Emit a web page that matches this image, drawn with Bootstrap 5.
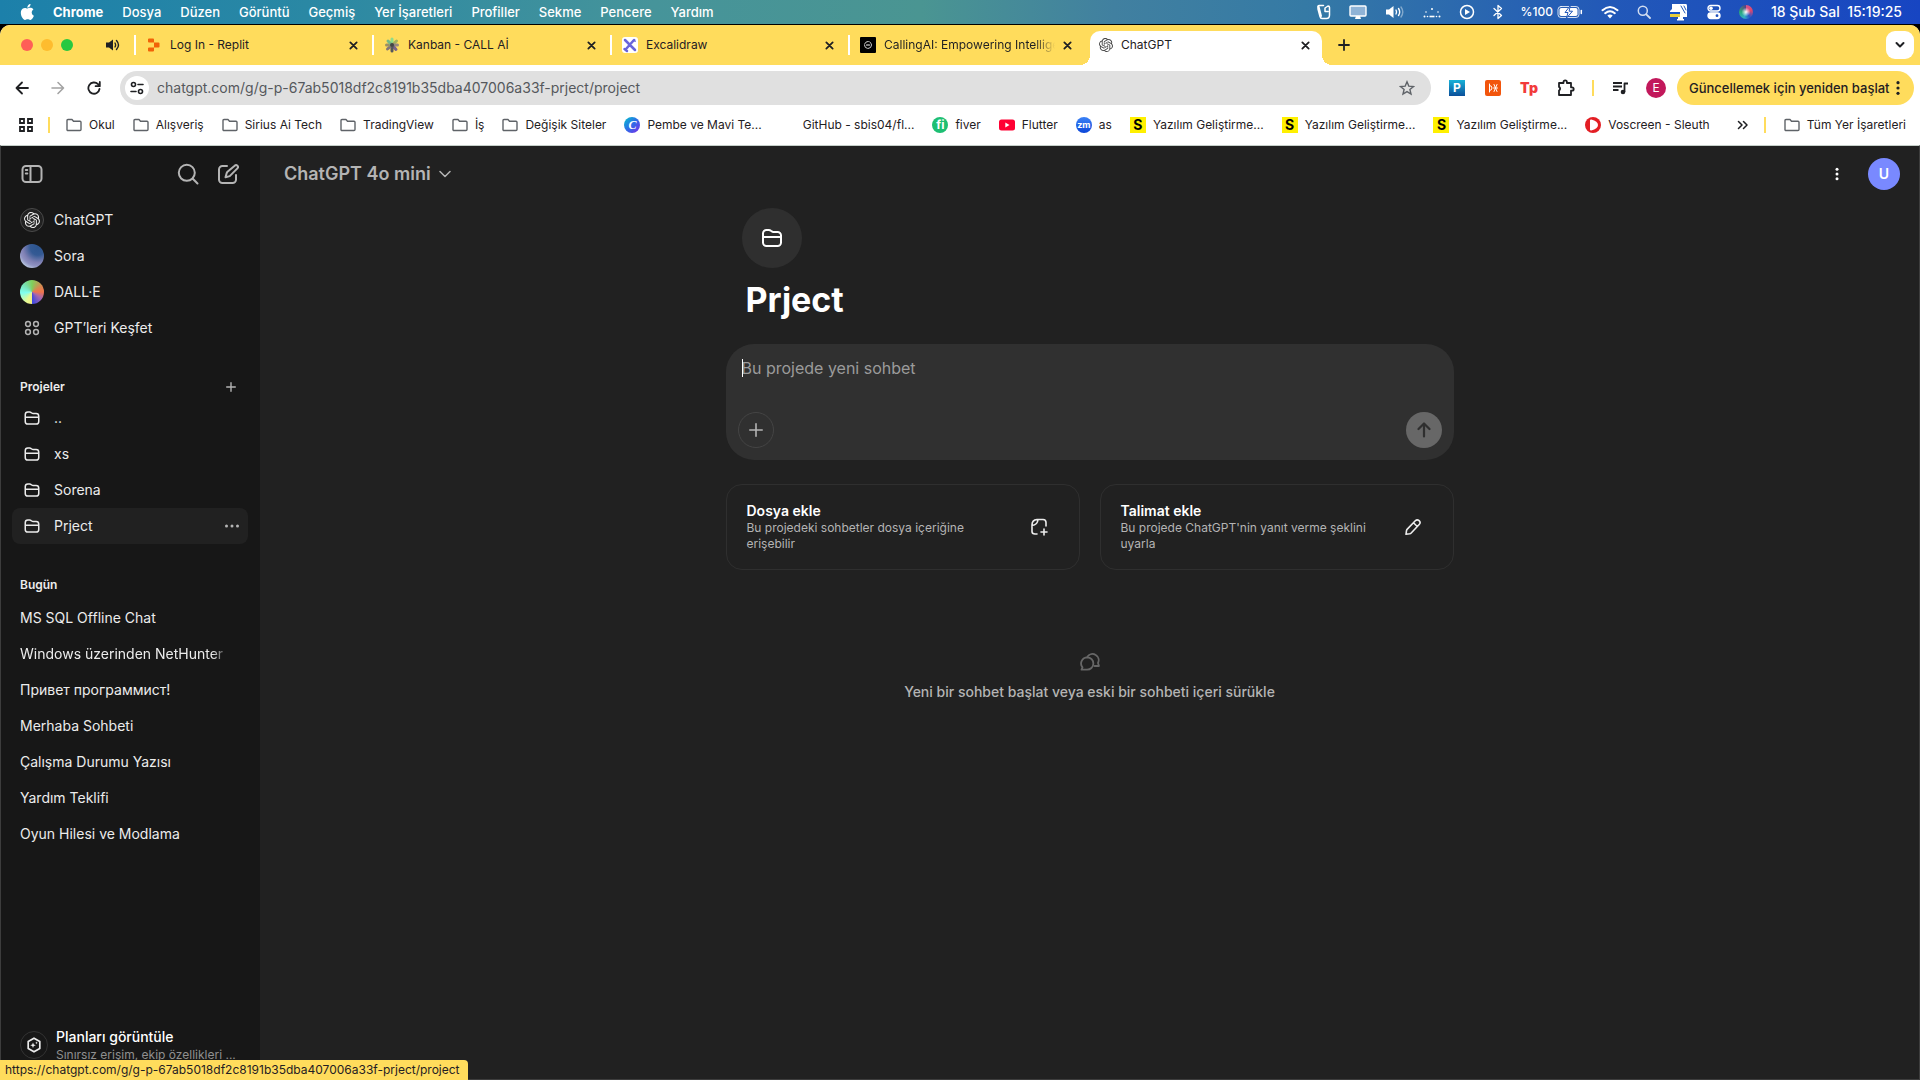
<!DOCTYPE html>
<html lang="tr" data-bs-theme="light">
<head>
<meta charset="utf-8">
<meta name="viewport" content="width=device-width, initial-scale=1">
<title>ChatGPT</title>
<link href="https://cdn.jsdelivr.net/npm/bootstrap@5.3.0/dist/css/bootstrap.min.css" rel="stylesheet">
<style>
:root{--gold:#ffdc5c;--ink:#1f2023;--side:#171717;--page:#212121;--fg:#ececec;--dim:#b4b4b4}
body{font-family:Inter,"Liberation Sans",sans-serif;font-size:12px;line-height:16px;background:#000;overflow:hidden}
svg{display:block;flex:none;fill:none;stroke:currentColor;stroke-width:2;stroke-linecap:round;stroke-linejoin:round}
svg .solid,svg.solid{fill:currentColor;stroke:none}
a{color:inherit;text-decoration:none}
button{background:none;border:0;padding:0;color:inherit;font:inherit}
.cell{display:flex;align-items:center;justify-content:center;flex:none}
/* system menu bar */
.sysbar{height:24px;background:linear-gradient(90deg,#1c80aa 0,#2a88a4 16%,#46949a 34%,#4a9592 48%,#4180a0 58%,#357aa5 68%,#2258b8 84%,#1745c2 100%);color:#fff;font-size:13px;font-weight:500;padding:0 18px 0 20px}
.sysbar nav{gap:19px}
.sysbar .tray{gap:18px}
.sysbar .charge{font-size:12px}
.clock{white-space:pre;font-size:14px}
.siri{width:14px;height:14px;border-radius:50%;background:radial-gradient(circle,#fff 0,#fff8 20%,transparent 45%),conic-gradient(#d3558b,#e0476c 20%,#2857c8 40%,#35b0c4 55%,#2aa87a 75%,#5b3f83)}
/* window */
.win{background:#fff;margin-top:1px;border-radius:10px 10px 0 0;overflow:hidden}
.strip{background:var(--gold);height:40px;padding:6px 6px 0 21px;color:var(--ink)}
.lights{gap:8px;width:83px}
.lights span{width:12px;height:12px;border-radius:50%}
.speaker{width:30px;padding-left:2px}
.tabitem{width:238px;height:20px;margin-top:4px;padding:0 14px 0 10px;position:relative;border-left:2px solid #fff}
.tabitem.on{background:#fff;border:0;height:34px;margin:0 0 0 4px;padding:0 8px 6px 9px;border-radius:10px 10px 0 0;width:232px}
.tabitem.on::before,.tabitem.on::after{content:"";position:absolute;bottom:0;width:10px;height:10px}
.tabitem.on::before{left:-10px;background:radial-gradient(circle at 0 0,transparent 10px,#fff 10px)}
.tabitem.on::after{right:-10px;background:radial-gradient(circle at 100% 0,transparent 10px,#fff 10px)}
.fade-end{overflow:hidden;white-space:nowrap;-webkit-mask-image:linear-gradient(90deg,#000 calc(100% - 20px),transparent)}
.tools{background:#fff;height:46px;padding:6px 6px 0 4px;color:var(--ink)}
.omni{height:34px;border-radius:17px;background:#e0e0e0;padding:0 16px 0 5px}
.omni input{background:none;border:0;outline:0;font-size:14px;line-height:20px;color:#55585c;width:100%;padding:0}
.sitebtn{width:24px;height:24px;border-radius:50%;background:#fff}
.update{height:34px;border-radius:17px;background:var(--gold);font-size:13px;font-weight:500;width:237px;padding:0 9px 0 12px}
.marks{height:34px;padding:0 14px 6px 18px;color:var(--ink)}
.marks .list{gap:18px}
.marks a{display:flex;align-items:center;gap:7px;white-space:nowrap}
.dir{color:#5f6368}
.fav{width:16px;height:16px;display:flex;align-items:center;justify-content:center;flex:none;font-weight:700;line-height:16px}
.fav.yz{background:#fff000;color:#000;font-size:14px}
.vline{width:2px;height:16px;background:var(--gold);flex:none}
/* application */
.app{background:var(--page);color:var(--fg);border:1px solid #3d3d3d;border-top-color:#c5cfc9;font-size:14px;line-height:20px}
.side{width:259px;background:var(--side);padding:0 12px 0 11px}
.side .row-link{display:flex;align-items:center;height:36px;padding:0 8px;border-radius:8px;gap:10px}
.side .row-link.on{background:#212121}
.side h2{font-size:12px;font-weight:600;line-height:16px;margin:0}
.side .head{height:34px;margin-top:24px;padding:0 8px}
.side .head + .row-link{margin-top:-4px}
.side .head + .row-link.chat{margin-top:-2px}
.chatname{width:208px}
.side .chatname{-webkit-mask-image:linear-gradient(90deg,#000 calc(100% - 16px),transparent)}
.ring{width:24px;height:24px;border-radius:50%}
.main-col{width:728px;max-width:100%}
.composer{background:#303030;border-radius:28px;height:116px;padding:12px}
.field{position:relative;height:24px}
.field::before{content:"";position:absolute;left:4px;top:3px;width:1px;height:18px;background:#fff}
.composer textarea{display:block;width:100%;background:none;border:0;outline:0;resize:none;color:var(--fg);font-size:16px;line-height:24px;padding:0 4px;height:24px}
.composer textarea::placeholder{color:#9b9b9b;opacity:1}
.tile{border:1px solid #2f2f2f;border-radius:16px;height:86px;padding:0 31px 0 20px;text-align:left;flex:1 1 0}
.tile small{font-size:12px;line-height:16px;color:var(--dim);display:block;width:250px}
.statusbox{position:fixed;left:0;bottom:0;height:20px;background:var(--gold);color:var(--ink);border-radius:0 4px 0 0;padding:2px 8px 0 5px;font-size:12px;line-height:16px}
</style>
<script src="https://cdn.jsdelivr.net/npm/bootstrap@5.3.0/dist/js/bootstrap.bundle.min.js"></script>
</head>
<body class="vh-100 d-flex flex-column">

<svg width="0" height="0" class="position-absolute" aria-hidden="true">
  <symbol id="x" viewBox="0 0 10 10"><path d="M1.500 1.500l7 7M8.500 1.500l-7 7"/></symbol>
  <symbol id="bmfolder" viewBox="0 0 16 16"><path d="M1 13V3.500Q1 2.500 2 2.500H6L7.500 4.300H14Q15 4.300 15 5.300V12.500Q15 13.500 14 13.500H1.500Z" stroke-width="1.400"/></symbol>
  <symbol id="folder" viewBox="0 0 24 24"><path d="M3 7.500A3.500 3.500 0 0 1 6.500 4h2.300c.8 0 1.500.3 2.100.8l.7.500c.5.400 1.100.7 1.800.7h4.100A3.500 3.500 0 0 1 21 9.500v7a3.500 3.500 0 0 1-3.500 3.500h-11A3.500 3.500 0 0 1 3 16.500zM3 11h18"/></symbol>
  <symbol id="openai" viewBox="0 0 24 24"><path class="solid" d="M22.2819 9.8211a5.9847 5.9847 0 0 0-.5157-4.9108 6.0462 6.0462 0 0 0-6.5098-2.9A6.0651 6.0651 0 0 0 4.9807 4.1818a5.9847 5.9847 0 0 0-3.9977 2.9 6.0462 6.0462 0 0 0 .7427 7.0966 5.98 5.98 0 0 0 .511 4.9107 6.051 6.051 0 0 0 6.5146 2.9001A5.9847 5.9847 0 0 0 13.2599 24a6.0557 6.0557 0 0 0 5.7718-4.2058 5.9894 5.9894 0 0 0 3.9977-2.9001 6.0557 6.0557 0 0 0-.7475-7.0729zm-9.022 12.6081a4.4755 4.4755 0 0 1-2.8764-1.0408l.1419-.0804 4.7783-2.7582a.7948.7948 0 0 0 .3927-.6813v-6.7369l2.02 1.1686a.071.071 0 0 1 .038.052v5.5826a4.504 4.504 0 0 1-4.4945 4.4944zm-9.6607-4.1254a4.4708 4.4708 0 0 1-.5346-3.0137l.142.0852 4.783 2.7582a.7712.7712 0 0 0 .7806 0l5.8428-3.3685v2.3324a.0804.0804 0 0 1-.0332.0615L9.74 19.9502a4.4992 4.4992 0 0 1-6.1408-1.6464zM2.3408 7.8956a4.485 4.485 0 0 1 2.3655-1.9728V11.6a.7664.7664 0 0 0 .3879.6765l5.8144 3.3543-2.0201 1.1685a.0757.0757 0 0 1-.071 0l-4.8303-2.7865A4.504 4.504 0 0 1 2.3408 7.872zm16.5963 3.8558L13.1038 8.364 15.1192 7.2a.0757.0757 0 0 1 .071 0l4.8303 2.7913a4.4944 4.4944 0 0 1-.6765 8.1042v-5.6772a.79.79 0 0 0-.407-.667zm2.0107-3.0231l-.142-.0852-4.7735-2.7818a.7759.7759 0 0 0-.7854 0L9.409 9.2297V6.8974a.0662.0662 0 0 1 .0284-.0615l4.8303-2.7866a4.4992 4.4992 0 0 1 6.6802 4.66zM8.3065 12.863l-2.02-1.1638a.0804.0804 0 0 1-.038-.0567V6.0742a4.4992 4.4992 0 0 1 7.3757-3.4537l-.142.0805L8.704 5.459a.7948.7948 0 0 0-.3927.6813zm1.0976-2.3654l2.602-1.4998 2.6069 1.4998v2.9994l-2.5974 1.4997-2.6067-1.4997Z"/></symbol>
</svg>

<header class="sysbar d-flex align-items-center justify-content-between">
  <nav class="d-flex align-items-center">
    <svg width="14" height="16" viewBox="1 0 21 24" class="solid"><path d="M12.152 6.896c-.948 0-2.415-1.078-3.96-1.04-2.04.027-3.91 1.183-4.961 3.014-2.117 3.675-.546 9.103 1.519 12.09 1.013 1.454 2.208 3.09 3.792 3.039 1.52-.065 2.09-.987 3.935-.987 1.831 0 2.35.987 3.96.948 1.637-.026 2.676-1.48 3.676-2.948 1.156-1.688 1.636-3.325 1.662-3.415-.039-.013-3.182-1.221-3.22-4.857-.026-3.040 2.480-4.494 2.597-4.559-1.429-2.090-3.623-2.324-4.390-2.376-2-.156-3.675 1.090-4.610 1.090zM15.530 3.830c.843-1.012 1.400-2.427 1.245-3.830-1.207.052-2.662.805-3.532 1.818-.780.896-1.454 2.338-1.273 3.714 1.338.104 2.715-.688 3.559-1.701"/></svg>
    <a href="#" class="fw-bold">Chrome</a><a href="#">Dosya</a><a href="#">Düzen</a><a href="#">Görüntü</a><a href="#">Geçmiş</a><a href="#">Yer İşaretleri</a><a href="#">Profiller</a><a href="#">Sekme</a><a href="#">Pencere</a><a href="#">Yardım</a>
  </nav>
  <div class="tray d-flex align-items-center">
    <svg width="14" height="16" viewBox="0 0 14 16" style="stroke-width:1.500"><path d="M6.500 1.500H2Q1 1.500 1 2.500V5l2 7.500Q3.500 14.500 5 14.500H9.500Q12.500 14.500 12.500 11V3.500Q12.500 2 11 2L8 4V7.500H11"/><path d="M1.500 2.500L4 12" style="stroke-width:2"/></svg>
    <svg width="18" height="16" viewBox="0 0 18 16"><rect x="1" y="2" width="16" height="10" rx="1" fill="#8fb3d6" stroke-width="1.400"/><path class="solid" d="M7 12h4l1 3H6z"/></svg>
    <svg width="20" height="16" viewBox="0 0 20 16"><path class="solid" d="M1 5.500h3L8.500 2v12L4 10.500H1z"/><path d="M11 6q1.200 2 0 4M13.500 4.500q2.400 3.500 0 7" stroke-width="1.400"/><path d="M16 3q3.600 5 0 10" stroke-width="1.400" opacity=".4"/></svg>
    <svg width="18" height="16" viewBox="0 0 18 16"><g class="solid"><circle cx="1.500" cy="12.500" r="1"/><circle cx="4.500" cy="12.500" r=".8"/><rect x="6.500" y="11.700" width="5" height="1.600"/><circle cx="13.500" cy="12.500" r=".8"/><circle cx="16.500" cy="12.500" r="1"/><circle cx="3" cy="8" r=".8"/><circle cx="9" cy="5" r="1"/><circle cx="15" cy="8" r=".8"/></g></svg>
    <svg width="16" height="16" viewBox="0 0 16 16"><circle cx="8" cy="8" r="6.500" stroke-width="1.500"/><path class="solid" d="M6 5v6l5-3z"/></svg>
    <svg width="10" height="16" viewBox="0 0 10 16"><path d="M1 4.500l7.500 7L5 14.500v-13l3.500 3L1 11.500" stroke-width="1.300"/></svg>
    <span class="d-flex align-items-center gap-1"><span class="charge">%100</span>
    <svg width="26" height="14" viewBox="0 0 26 14"><rect x="1" y="1.500" width="21" height="11" rx="3" stroke-width="1" opacity=".8"/><path d="M24.300 5.500v3" stroke-width="1.500"/><rect class="solid" x="2.500" y="3" width="18" height="8" rx="1.800"/><path d="M13 1L8 7.500h3L9.500 13l6-6.800h-3z" fill="#fff" stroke="#2258b8" stroke-width="1"/></svg></span>
    <svg width="18" height="14" viewBox="0 0 18 14"><path d="M1.500 5.200q7.500-6.500 15 0M4.200 8.200q4.800-4 9.600 0" stroke-width="2"/><path class="solid" d="M9 13.500L6.300 10.500q2.700-2 5.400 0z"/></svg>
    <svg width="14" height="14" viewBox="0 0 14 14" opacity=".8"><circle cx="5.800" cy="5.800" r="4.500" stroke-width="1.500"/><path d="M9.300 9.300l3.700 3.700" stroke-width="1.800"/></svg>
    <svg width="20" height="18" viewBox="0 0 20 18"><path class="solid" d="M3 1h14q1 0 1 2v11h-4v2h1v1.500H8V16h1v-2H1V8l2-2z"/><path d="M1 9h10v2H1z" fill="#1554c8" stroke="none"/><path d="M1 11h10v3H1z" fill="#e8ce3a" stroke="none"/><path d="M12 3l4 7M15 3l2 4" stroke="#2258b8" stroke-width="1"/></svg>
    <svg width="14" height="16" viewBox="0 0 14 16"><rect x="1" y="1.500" width="12" height="5.500" rx="2.700" stroke-width="1.400"/><rect x="1" y="9" width="12" height="5.500" rx="2.700" fill="currentColor" stroke-width="1.400"/><circle class="solid" cx="4" cy="4.200" r="1.800"/><circle cx="10" cy="11.700" r="1.400" fill="#2050bd" stroke="none"/></svg>
    <span class="siri"></span>
    <span class="clock">18 Şub Sal  15:19:25</span>
  </div>
</header>

<div class="win flex-grow-1 d-flex flex-column">
  <div class="strip d-flex align-items-start">
    <div class="lights d-flex align-items-center mt-2"><span style="background:#ff5f57"></span><span style="background:#febc2e"></span><span style="background:#28c840"></span></div>
    <div class="speaker mt-2"><svg width="14" height="12" viewBox="0 0 14 12"><path class="solid" d="M0 3.500h3L7 .5v11L3 8.500H0z"/><path d="M9 4q1.200 2 0 4M10.500 1.500q4 4.500 0 9" stroke-width="1.400"/></svg></div>
    <div class="tabitem d-flex align-items-center gap-2">
      <svg width="16" height="16" viewBox="0 0 16 16" class="solid" style="color:#f26207"><path d="M3 1.500h4q1 0 1 1v3H3q-1 0-1-1v-2q0-1 1-1zM8 5.500h4.500q1 0 1 1v3q0 1-1 1H8zM3 10.500h5v3q0 1-1 1H3q-1 0-1-1v-2q0-1 1-1z"/></svg>
      <span class="flex-grow-1">Log In - Replit</span><button aria-label="Kapat"><svg width="9" height="9"><use href="#x"/></svg></button>
    </div>
    <div class="tabitem d-flex align-items-center gap-2">
      <svg width="16" height="16" viewBox="0 0 16 16"><g stroke-width="3"><path d="M8 8V2" stroke="#8edb8a"/><path d="M8 8l4.500-4" stroke="#a6b05c"/><path d="M8 8h5.500" stroke="#988a7e"/><path d="M8 8l4 4.500" stroke="#7a6488"/><path d="M8 8v6" stroke="#55565c"/><path d="M8 8l-4.500 4" stroke="#81757a"/><path d="M8 8H2.500" stroke="#9b9064"/><path d="M8 8L4 4" stroke="#74b886"/></g><circle cx="8" cy="8" r="2" fill="#444" stroke="none"/></svg>
      <span class="flex-grow-1">Kanban - CALL Aİ</span><button aria-label="Kapat"><svg width="9" height="9"><use href="#x"/></svg></button>
    </div>
    <div class="tabitem d-flex align-items-center gap-2">
      <svg width="16" height="16" viewBox="0 0 16 16"><rect width="16" height="16" rx="3" fill="#fff" stroke="none"/><path d="M3 3l10 10M12 3L4 12M2.500 12l2.500 2" stroke="#6965db" stroke-width="2.500"/><path d="M10 4l3-2 1 3z" fill="#6965db" stroke="none"/></svg>
      <span class="flex-grow-1">Excalidraw</span><button aria-label="Kapat"><svg width="9" height="9"><use href="#x"/></svg></button>
    </div>
    <div class="tabitem d-flex align-items-center gap-2">
      <svg width="16" height="16" viewBox="0 0 16 16"><rect width="16" height="16" rx="1" fill="#000" stroke="none"/><circle cx="8" cy="8" r="3.500" stroke="#ccc" stroke-width="1" stroke-dasharray="5 1"/><path d="M6.500 8h3" stroke="#fff" stroke-width="1.200"/></svg>
      <span class="flex-grow-1 fade-end">CallingAI: Empowering Intelligence</span><button aria-label="Kapat"><svg width="9" height="9"><use href="#x"/></svg></button>
    </div>
    <div class="tabitem on d-flex align-items-center gap-2">
      <svg width="14" height="14" style="color:#444"><use href="#openai"/></svg>
      <span class="flex-grow-1">ChatGPT</span><button class="me-1" aria-label="Kapat"><svg width="9" height="9"><use href="#x"/></svg></button>
    </div>
    <button class="ms-3 mt-2" aria-label="Yeni sekme"><svg width="12" height="12" viewBox="0 0 12 12" style="stroke-width:1.800"><path d="M6 1v10M1 6h10"/></svg></button>
    <button class="cell ms-auto bg-white" style="width:28px;height:28px;border-radius:9px" aria-label="Sekme ara"><svg width="10" height="8" viewBox="0 0 10 8"><path d="M1.500 2L5 5.500 8.500 2"/></svg></button>
  </div>

  <div class="tools d-flex align-items-start">
    <div class="d-flex" style="width:116px">
      <button class="cell" style="width:36px;height:34px" aria-label="Geri"><svg width="14" height="14" viewBox="0 0 14 14" style="stroke-width:1.800"><path d="M13 7H1.500M7 1.500L1.500 7 7 12.500"/></svg></button>
      <button class="cell" style="width:36px;height:34px;color:#a3a3a3" aria-label="İleri"><svg width="14" height="14" viewBox="0 0 14 14" style="stroke-width:1.600"><path d="M1 7h11.500M7 1.500L12.500 7 7 12.500"/></svg></button>
      <button class="cell" style="width:36px;height:34px" aria-label="Yenile"><svg width="14" height="14" viewBox="0 0 14 14" style="stroke-width:1.800"><path d="M12.500 8A5.600 5.600 0 1 1 11 3.200L12.700 5M12.800 1v4.200H8.600"/></svg></button>
    </div>
    <div class="omni d-flex align-items-center flex-grow-1">
      <button class="sitebtn cell" aria-label="Site bilgileri"><svg width="14" height="14" viewBox="0 0 14 14" style="stroke-width:1.600"><circle cx="3.500" cy="3.500" r="2"/><path d="M8 3.500h5M1 10.500h5"/><circle cx="10.500" cy="10.500" r="2"/></svg></button>
      <label class="visually-hidden" for="addr">Adres</label>
      <input id="addr" class="ms-2" value="chatgpt.com/g/g-p-67ab5018df2c8191b35dba407006a33f-prject/project">
      <button aria-label="Yer işareti ekle" class="dir"><svg width="16" height="16" viewBox="0 0 16 16" style="stroke-width:1.400;stroke-linejoin:miter"><path d="M8 1.800l1.800 4.300 4.700.4-3.600 3 1.100 4.600L8 11.600l-4 2.500 1.100-4.600-3.600-3 4.700-.4z"/></svg></button>
    </div>
    <div class="d-flex align-items-center" style="height:34px;width:246px;padding-left:18px">
      <span class="cell" style="width:16px;height:16px;margin-right:20px;background:linear-gradient(#18b2d8,#0b4f9a);color:#fff;font-weight:700;font-size:12px">P</span>
      <svg width="16" height="16" viewBox="0 0 16 16" style="margin-right:20px"><rect width="16" height="16" rx="2" fill="#f2550c" stroke="none"/><path d="M4.500 4v8M4.500 5.500q2.500 0 2.500 2.500t-2.500 2.500M8.500 8h4M9 4.500l3 7M12 4.500l-3 7" stroke="#fff" stroke-width="1"/></svg>
      <span class="cell" style="width:16px;margin-right:20px;color:#f23b3b;font-weight:900;font-size:14px">Tp</span>
      <svg width="18" height="18" viewBox="0 0 18 18" style="margin-right:17px;stroke-width:1.800"><path d="M2 4h4.500V3a1.700 1.700 0 0 1 3.400 0v1H14v4.300h1a1.700 1.700 0 0 1 0 3.400h-1V16H2v-4.500a2 2 0 0 0 0-3.600z"/></svg>
      <span class="vline" style="margin-right:18px"></span>
      <svg width="16" height="16" viewBox="0 0 16 16" style="margin-right:18px;stroke-linecap:butt;stroke-width:1.800"><path d="M1 3h9M1 6.500h9M1 10h5.500M12.500 12V3.500H16"/><circle class="solid" cx="11" cy="12" r="2.300"/></svg>
      <span class="cell rounded-circle text-white" style="width:20px;height:20px;background:#c2185b">E</span>
    </div>
    <button class="update d-flex align-items-center justify-content-between text-nowrap">Güncellemek için yeniden başlat<svg width="14" height="14" viewBox="0 0 14 14" class="solid"><circle cx="7" cy="1.700" r="1.600"/><circle cx="7" cy="7" r="1.600"/><circle cx="7" cy="12.300" r="1.600"/></svg></button>
  </div>

  <nav class="marks d-flex align-items-center">
    <svg width="16" height="16" viewBox="0 0 16 16" style="stroke-linejoin:miter;stroke-width:1.800"><path d="M2 2h4v4H2zM10 2h4v4h-4zM2 10h4v4H2zM10 10h4v4h-4z"/></svg>
    <span class="vline" style="margin:0 16px 0 14px"></span>
    <div class="list d-flex align-items-center">
      <a href="#"><svg class="dir" width="16" height="16"><use href="#bmfolder"/></svg>Okul</a>
      <a href="#"><svg class="dir" width="16" height="16"><use href="#bmfolder"/></svg>Alışveriş</a>
      <a href="#"><svg class="dir" width="16" height="16"><use href="#bmfolder"/></svg>Sirius Ai Tech</a>
      <a href="#"><svg class="dir" width="16" height="16"><use href="#bmfolder"/></svg>TradingView</a>
      <a href="#"><svg class="dir" width="16" height="16"><use href="#bmfolder"/></svg>İş</a>
      <a href="#"><svg class="dir" width="16" height="16"><use href="#bmfolder"/></svg>Değişik Siteler</a>
      <a href="#"><span class="fav rounded-circle text-white fst-italic" style="background:linear-gradient(135deg,#00c4cc,#2f6be8 50%,#7d2ae8);font-family:'Liberation Serif',serif">C</span>Pembe ve Mavi Te...</a>
      <a href="#"><span class="fav"></span>GitHub - sbis04/fl...</a>
      <a href="#"><span class="fav rounded-circle text-white" style="background:#1dbf73">fi</span>fiver</a>
      <a href="#"><svg width="16" height="16" viewBox="0 0 16 16"><rect y="2.500" width="16" height="11" rx="2.500" fill="#f03" stroke="none"/><path d="M6.300 5.500v5l4.200-2.500z" fill="#fff" stroke="none"/></svg>Flutter</a>
      <a href="#"><span class="fav rounded-circle text-white" style="background:linear-gradient(#3b82f6,#0b45d8);font-size:9px">zm</span>as</a>
      <a href="#"><span class="fav yz">S</span>Yazılım Geliştirme...</a>
      <a href="#"><span class="fav yz">S</span>Yazılım Geliştirme...</a>
      <a href="#"><span class="fav yz">S</span>Yazılım Geliştirme...</a>
      <a href="#"><svg width="16" height="16" viewBox="0 0 16 16"><circle cx="8" cy="8" r="8" fill="#e31e24" stroke="none"/><path d="M6 3.500q6 1.500 6 4.500t-6 4.500z" fill="#fff" stroke="#fff"/></svg>Voscreen - Sleuth</a>
    </div>
    <button class="ms-auto" aria-label="Diğer"><svg width="11" height="10" viewBox="0 0 11 10" style="stroke-width:1.500"><path d="M1.500 1.500L5 5 1.500 8.500M6.500 1.500L10 5 6.500 8.500"/></svg></button>
    <span class="vline" style="margin:0 18px 0 16px"></span>
    <a href="#"><svg class="dir" width="16" height="16"><use href="#bmfolder"/></svg>Tüm Yer İşaretleri</a>
  </nav>

  <div class="app flex-grow-1 d-flex">
    <aside class="side d-flex flex-column">
      <div class="d-flex align-items-center px-2" style="height:56px;color:var(--dim)">
        <button aria-label="Kenar çubuğu"><svg width="24" height="24" viewBox="0 0 24 24"><rect x="2.500" y="4" width="19" height="16" rx="3.500"/><path d="M10.500 4v16M5.800 8h1.500M5.800 11.500h1.500"/></svg></button>
        <button class="ms-auto me-3" aria-label="Ara"><svg width="24" height="24" viewBox="0 0 24 24"><circle cx="10.800" cy="10.800" r="8"/><path d="M16.800 16.800L21.500 21.500"/></svg></button>
        <button aria-label="Yeni sohbet"><svg width="24" height="24" viewBox="0 0 24 24"><path d="M11 4H6.500A3.500 3.500 0 0 0 3 7.500v10A3.500 3.500 0 0 0 6.500 21h10a3.500 3.500 0 0 0 3.500-3.500V13"/><path d="M18.700 3.700a1.900 1.900 0 0 1 2.700 2.700l-7.700 7.700-4.200 1.200 1.200-4.200q.3-.8.800-1.300z"/></svg></button>
      </div>
      <a href="#" class="row-link"><span class="ring cell" style="border:1px solid #4a4a4a;background:#212121"><svg width="16" height="16"><use href="#openai"/></svg></span>ChatGPT</a>
      <a href="#" class="row-link"><span class="ring" style="background:radial-gradient(circle at 75% 15%,#2c548e 0,#345a94 28%,#8081b4 55%,#8f92c2 68%,#b4c0dc 80%,#5c70a8 95%,#2a3d78 115%)"></span>Sora</a>
      <a href="#" class="row-link"><span class="ring" style="background:conic-gradient(#7fd05c 0,#d98650 60deg,#f0744c 90deg,#a466b0 125deg,#3c48e0 178deg,#f2f08a 182deg,#e8fa92 210deg,#80fff0 265deg,#78e0b0 315deg,#7fd05c)"></span>DALL·E</a>
      <a href="#" class="row-link"><span class="ring cell" style="color:var(--dim)"><svg width="16" height="16" viewBox="0 0 16 16" style="stroke-width:1.500"><circle cx="4" cy="4" r="2.400"/><circle cx="12" cy="4" r="2.400"/><circle cx="4" cy="12" r="2.400"/><circle cx="12" cy="12" r="2.400"/></svg></span>GPT’leri Keşfet</a>
      <div class="head d-flex align-items-center justify-content-between"><h2>Projeler</h2><button class="me-1" aria-label="Proje ekle" style="color:var(--dim)"><svg width="10" height="10" viewBox="0 0 10 10" style="stroke-width:1.400"><path d="M5 .7v8.600M.7 5h8.600"/></svg></button></div>
      <a href="#" class="row-link"><span class="ring cell"><svg width="18" height="18"><use href="#folder"/></svg></span>..</a>
      <a href="#" class="row-link"><span class="ring cell"><svg width="18" height="18"><use href="#folder"/></svg></span>xs</a>
      <a href="#" class="row-link"><span class="ring cell"><svg width="18" height="18"><use href="#folder"/></svg></span>Sorena</a>
      <div class="row-link on"><span class="ring cell"><svg width="18" height="18"><use href="#folder"/></svg></span><a href="#">Prject</a><button class="ms-auto" aria-label="Seçenekler" style="color:var(--dim)"><svg width="16" height="16" viewBox="0 0 16 16" class="solid"><circle cx="2.500" cy="8" r="1.500"/><circle cx="8" cy="8" r="1.500"/><circle cx="13.500" cy="8" r="1.500"/></svg></button></div>
      <div class="head d-flex align-items-center"><h2>Bugün</h2></div>
      <a href="#" class="row-link chat">MS SQL Offline Chat</a>
      <a href="#" class="row-link chat"><span class="chatname fade-end">Windows üzerinden NetHunter</span></a>
      <a href="#" class="row-link chat">Привет программист!</a>
      <a href="#" class="row-link chat">Merhaba Sohbeti</a>
      <a href="#" class="row-link chat">Çalışma Durumu Yazısı</a>
      <a href="#" class="row-link chat">Yardım Teklifi</a>
      <a href="#" class="row-link chat">Oyun Hilesi ve Modlama</a>
      <a href="#" class="mt-auto d-flex align-items-center gap-2 px-2" style="height:54px;margin-bottom:7px">
        <span class="cell rounded-circle" style="width:28px;height:28px;border:1px solid #333"><svg width="16" height="16" viewBox="0 0 16 16" style="stroke-width:1.700"><path d="M8 1.200l5.800 3.400v6.800L8 14.800 2.200 11.400V4.600z"/><path class="solid" d="M7 5.500l.8 2 2 .8-2 .8-.8 2-.8-2-2-.8 2-.8zM10.500 4.500l.4 1 1 .4-1 .4-.4 1-.4-1-1-.4 1-.4z"/></svg></span>
        <span><span class="d-block text-white fw-medium" style="line-height:20px">Planları görüntüle</span><span class="d-block" style="font-size:12px;line-height:16px;color:#8f8f8f">Sınırsız erişim, ekip özellikleri ...</span></span>
      </a>
    </aside>

    <main class="flex-grow-1 d-flex flex-column">
      <div class="d-flex align-items-center" style="height:56px;padding:0 19px 0 24px;color:var(--dim)">
        <button class="d-flex align-items-center gap-2 fw-semibold" style="font-size:18px;line-height:28px">ChatGPT 4o mini<svg width="12" height="8" viewBox="0 0 12 8" style="stroke-width:1.500"><path d="M1 1.500l5 5 5-5"/></svg></button>
        <button class="ms-auto text-white" aria-label="Menü"><svg width="16" height="16" viewBox="0 0 16 16" class="solid"><circle cx="8" cy="3.200" r="1.500"/><circle cx="8" cy="8" r="1.500"/><circle cx="8" cy="12.800" r="1.500"/></svg></button>
        <button class="cell rounded-circle text-white fw-semibold" style="width:32px;height:32px;background:#7989ff;margin-left:23px">U</button>
      </div>
      <div class="main-col mx-auto">
        <div class="px-3">
          <div class="cell rounded-circle text-white" style="width:60px;height:60px;background:#2f2f2f;margin-top:6px"><svg width="24" height="24"><use href="#folder"/></svg></div>
          <h1 class="text-white fw-bold" style="font-size:34px;line-height:40px;margin:12px 0 24px 4px">Prject</h1>
        </div>
        <form class="composer d-flex flex-column justify-content-between">
          <label class="visually-hidden" for="prompt">Mesaj</label>
          <div class="field"><textarea id="prompt" placeholder="Bu projede yeni sohbet"></textarea></div>
          <div class="d-flex justify-content-between">
            <button type="button" class="cell rounded-circle" style="width:36px;height:36px;border:1px solid #444;color:var(--dim)" aria-label="Ekle"><svg width="14" height="14" viewBox="0 0 14 14" style="stroke-width:1.600"><path d="M7 .8v12.400M.8 7h12.400"/></svg></button>
            <button type="button" class="cell rounded-circle" style="width:36px;height:36px;background:#676767;color:#2f2f2f" aria-label="Gönder"><svg width="16" height="16" viewBox="0 0 16 16" style="stroke-width:2.200"><path d="M8 14.500V2M2.500 7L8 1.500 13.500 7"/></svg></button>
          </div>
        </form>
        <div class="d-flex mt-4" style="gap:20px">
          <button class="tile d-flex align-items-center justify-content-between"><span><span class="d-block text-white fw-semibold" style="line-height:18px">Dosya ekle</span><small>Bu projedeki sohbetler dosya içeriğine erişebilir</small></span><svg width="18" height="18" viewBox="0 0 18 18" style="stroke-width:1.600"><path d="M16 8V4.500Q16 1.500 13 1.500H7Q2 2 2 7v6.500Q2 16 5 16h2M8 1.500Q7.500 7 2 7.500M14 11v6M11 14h6"/></svg></button>
          <button class="tile d-flex align-items-center justify-content-between"><span><span class="d-block text-white fw-semibold" style="line-height:18px">Talimat ekle</span><small>Bu projede ChatGPT'nin yanıt verme şeklini uyarla</small></span><svg width="18" height="18" viewBox="0 0 18 18" style="stroke-width:1.600"><path d="M11.300 2.800a2.600 2.600 0 0 1 3.900 3.700l-8 8.500q-.6.600-1.500.8L2 16.300l.5-3.700q.2-.9.800-1.500zM9.500 4.800l3.800 3.700"/></svg></button>
        </div>
        <div class="d-flex flex-column align-items-center fw-medium" style="padding-top:82px;color:var(--dim)">
          <svg width="20" height="20" viewBox="0 0 20 20" style="color:#676767;stroke-width:1.800;margin-bottom:10px"><path d="M7.300 5.300a6.200 6.200 0 0 1-.3 12.400H1.500l1-2.300A6.200 6.200 0 0 1 7.300 5.300z"/><path d="M7.500 4.500A6.200 6.200 0 0 1 18 11l1 3h-4.500"/></svg>
          Yeni bir sohbet başlat veya eski bir sohbeti içeri sürükle
        </div>
      </div>
    </main>
  </div>
</div>
<div class="statusbox">https://chatgpt.com/g/g-p-67ab5018df2c8191b35dba407006a33f-prject/project</div>
</body>
</html>
